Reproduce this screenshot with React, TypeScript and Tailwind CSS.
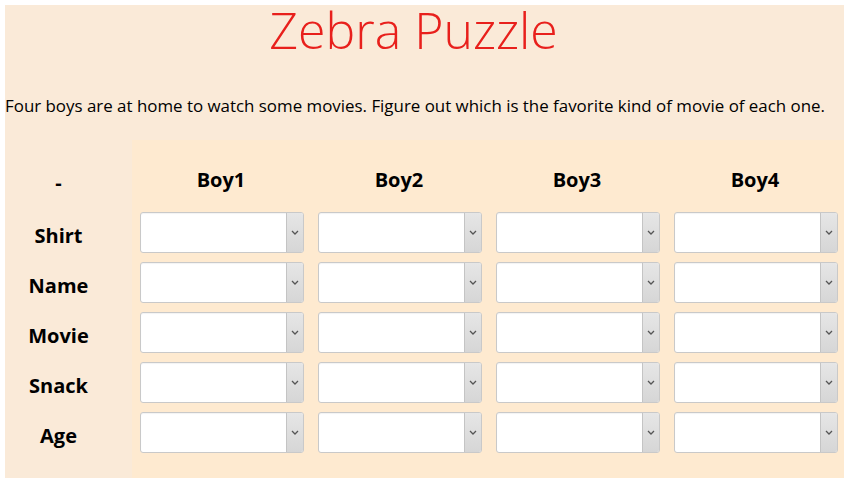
import React from "react";

const boys = ["Boy1", "Boy2", "Boy3", "Boy4"];
const rows = ["Shirt", "Name", "Movie", "Snack", "Age"];

function Select() {
  return (
    <div className="flex h-[41px] w-[164px] overflow-hidden rounded-[3px] border border-[#c9c9c9] bg-white shadow-[inset_0_1px_1px_rgba(0,0,0,0.05)]">
      <div className="flex-1" />
      <div className="flex w-[17px] items-center justify-center border-l border-[#c4c4c4] bg-gradient-to-b from-[#e6e6e6] to-[#d6d6d6]">
        <svg width="8" height="5" viewBox="0 0 8 5">
          <path d="M1 1 L4 4 L7 1" stroke="#555" strokeWidth="1.3" fill="none" />
        </svg>
      </div>
    </div>
  );
}

export default function App() {
  return (
    <div className="bg-white p-[5px] pr-[6px] pb-[7px]" style={{ fontFamily: '"Open Sans", "Noto Sans", sans-serif' }}>
      <div className="bg-[#faead8]">
        <h1 className="pr-[22px] text-center text-[50px] font-light leading-[50px] text-[#e8201c]">Zebra Puzzle</h1>
        <p className="mt-[41px] text-[16.9px] leading-[20px] text-black">
          Four boys are at home to watch some movies. Figure out which is the favorite kind of movie of each one.
        </p>
        <div className="mt-[24px] grid grid-cols-[127px_repeat(4,178px)]">
          <div className="flex h-[67px] items-end justify-center pb-[12px] pr-[20px] text-[20px] font-bold leading-[24px] text-black">-</div>
          {boys.map((b) => (
            <div key={b} className="flex h-[67px] items-end justify-center bg-[#feead0] pb-[15px] text-[20px] font-bold leading-[24px] text-black">
              {b}
            </div>
          ))}
          {rows.map((r) => (
            <React.Fragment key={r}>
              <div className="flex h-[50px] items-center justify-center pr-[20px] pt-[8px] text-[20px] font-bold text-black">{r}</div>
              {boys.map((b) => (
                <div key={b} className="flex h-[50px] items-center justify-start bg-[#feead0] pl-[8px]">
                  <Select />
                </div>
              ))}
            </React.Fragment>
          ))}
          <div className="h-[21px]" />
          {boys.map((b) => (
            <div key={b} className="h-[21px] bg-[#feead0]" />
          ))}
        </div>
      </div>
    </div>
  );
}
